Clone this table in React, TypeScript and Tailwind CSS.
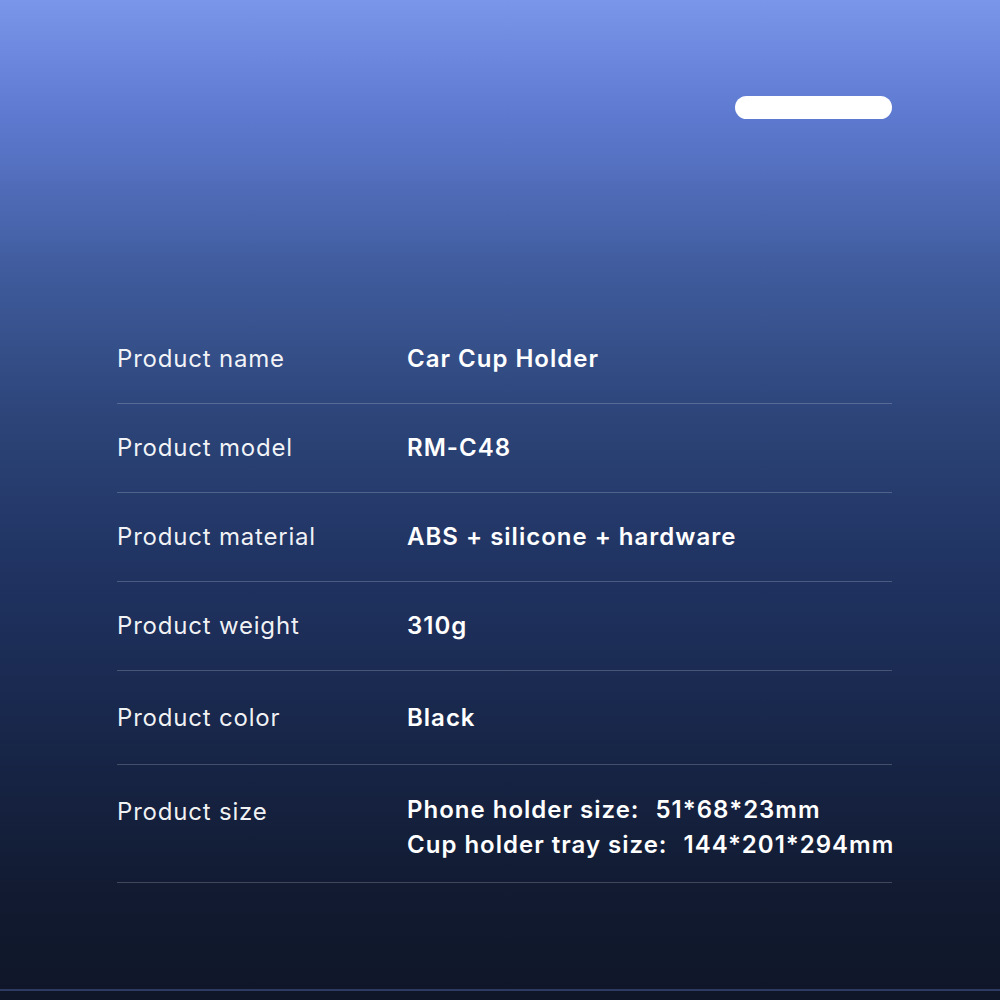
import React from "react";

const rows: { label: string; value: React.ReactNode; h: string; top?: boolean }[] = [
  { label: "Product name", value: "Car Cup Holder", h: "h-[89px]" },
  { label: "Product model", value: "RM-C48", h: "h-[89px]" },
  { label: "Product material", value: "ABS + silicone + hardware", h: "h-[89px]" },
  { label: "Product weight", value: "310g", h: "h-[89px]" },
  { label: "Product color", value: "Black", h: "h-[94px]" },
  {
    label: "Product size",
    value: (
      <div className="flex flex-col leading-[35px] pt-[6px]">
        <span>
          Phone holder size:<span className="inline-block w-[16px]" />51*68*23mm
        </span>
        <span>
          Cup holder tray size:<span className="inline-block w-[16px]" />144*201*294mm
        </span>
      </div>
    ),
    h: "h-[118px]",
    top: true,
  },
];

export default function App() {
  return (
    <div
      className="w-[1000px] h-[1000px] flex flex-col bg-[linear-gradient(180deg,#7a96eb_0%,#5d79cf_12%,#3e5a9a_28%,#2c4478_42%,#1f3260_58%,#172547_75%,#111a30_90%,#0f1628_100%)] text-white"
      style={{ fontFamily: "Inter, 'Open Sans', sans-serif" }}
    >
      <div className="flex justify-end pr-[108px] pt-[96px]">
        <div className="w-[157px] h-[23px] rounded-full bg-white" />
      </div>
      <div className="ml-[117px] mr-[108px] mt-[196px] flex flex-col">
        {rows.map((r, i) => (
          <div key={i} className={`${r.h} flex items-center border-b border-white/20`}>
            <div
              className={`w-[290px] shrink-0 text-[24px] text-white/95 tracking-[0.8px] ${r.top ? "self-start mt-[29px]" : ""}`}
            >
              {r.label}
            </div>
            <div className="text-[24px] font-semibold tracking-[1px] whitespace-nowrap">{r.value}</div>
          </div>
        ))}
      </div>
      <div className="flex-1" />
      <div className="h-[2px] bg-[#2d3a62] mb-[9px]" />
    </div>
  );
}
